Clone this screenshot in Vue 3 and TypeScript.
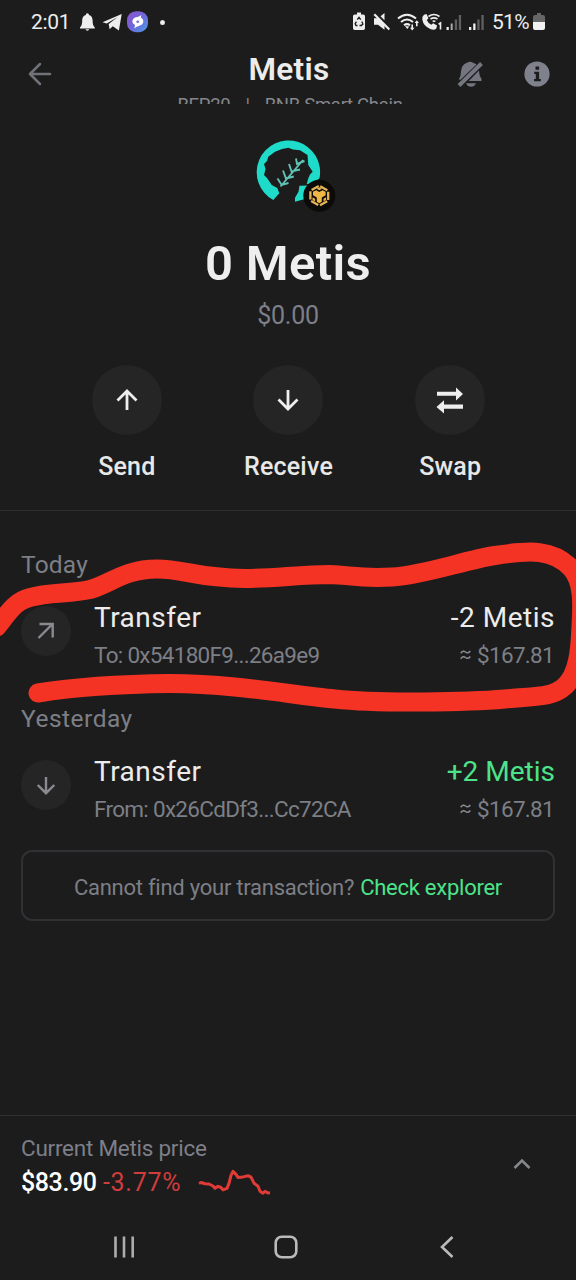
<script setup lang="ts">
interface Transaction {
  day: string
  direction: 'out' | 'in'
  party: string
  amount: string
  fiat: string
}

const transactions: Transaction[] = [
  { day: 'Today', direction: 'out', party: 'To: 0x54180F9...26a9e9', amount: '-2 Metis', fiat: '$167.81' },
  { day: 'Yesterday', direction: 'in', party: 'From: 0x26CdDf3...Cc72CA', amount: '+2 Metis', fiat: '$167.81' },
]
</script>

<template>
  <div class="screen">
    <div class="status">
      <span class="clock">2:01</span>
      <svg class="notifs" width="84" height="24" viewBox="0 0 84 24">
        <path d="M8.300 3.200a1.700 1.700 0 0 1 1.700 1.800c2.600.8 3.600 3 3.600 5.500 0 4 .8 5.500 2.200 7v1H1v-1c1.400-1.500 2.200-3 2.200-7C3.200 8 4.200 5.800 6.800 5a1.600 1.600 0 0 1 1.500-1.800zM6.500 19.300h3.700a1.900 1.900 0 0 1-3.700 0z" fill="#eee" />
        <path d="M23.500 12.200 42.700 4l-2.800 16.500-6.100-4.300-3.200 3-.9-5.200 9-7-11 6.500z" fill="#eee" />
        <defs>
          <linearGradient id="badge" x1="0" y1="0" x2="1" y2="1">
            <stop offset="0" stop-color="#8e4fd0" />
            <stop offset=".5" stop-color="#6f68d8" />
            <stop offset="1" stop-color="#4aa0e8" />
          </linearGradient>
        </defs>
        <rect x="48" y="1.200" width="21" height="21" rx="9" fill="url(#badge)" />
        <path d="M62.300 5l-.5 2.700c3 1.200 3.400 5.200.7 7.100-2 1.500-4.600 1.200-7.200 3.700l.8-3.500c-3.300-1.300-3.500-5-.8-6.900 2-1.400 4.700-.8 7-3.100z" fill="#fff" />
        <circle cx="58.700" cy="11.700" r="1.300" fill="#6f68d8" />
      </svg>
      <i class="dot" />
      <svg class="system" width="134" height="24" viewBox="0 0 134 24">
        <path d="M5 2.500h4v2h2.300q1.700 0 1.700 1.700v12.100q0 1.700-1.700 1.700H2.700Q1 20 1 18.300V6.200q0-1.700 1.700-1.700H5z" fill="#eee" />
        <path d="M5.300 9.700 7 7.300l1.700 2.400M9.800 11.500l1.100 2.500-1.600 1.500H7.500M5.500 15.500H4l-.9-1.700 1.300-2.200" fill="none" stroke="#1c1c1c" stroke-width="1.300" />
        <path d="M22 8.300h4.500l6 6.200v5.200L26 14.800h-4zM28.500 6.200l4-3.200v7.300z" fill="#eee" />
        <path d="m22.300 4.300 15 15.200" stroke="#eee" stroke-width="2.200" />
        <g fill="none" stroke="#eee" stroke-width="2">
          <path d="M46 8.500q9-7.600 18 0M49 12q6-5 12 0M52 15.300q3-2.300 6 0" />
        </g>
        <path d="m53 16 2.300 3 2-2.500zM60.200 20.500l-2.200-2.700h1.400v-3.300H61v3.300h1.400zM64.800 10.300l2.200 2.700h-1.400v3.300H64V13h-1.400z" fill="#eee" />
        <path d="M72 4.800 74.500 4l2 4.300-1.700 1.700q1.300 3.300 4.500 4.800l1.800-1.500 4 2.300-.8 2.800q-2 2.200-6 .5-7-3-8-9.500-.4-3 1.700-4.600z" fill="#eee" />
        <path d="M76.500 6.500q5.300-4 11 0M78.500 9q3.500-2.300 7 0M80.700 11.500q1.300-1 2.600 0" fill="none" stroke="#eee" stroke-width="1.600" />
        <path d="M86.600 14.200 88.500 13V19.500" fill="none" stroke="#eee" stroke-width="1.600" />
        <path d="M94.500 17h2.300v3h-2.300zM117 17h2.300v3H117zM121.200 13.500h2.300V20h-2.300z" fill="#eee" />
        <path d="M98.700 13.500h2v6.500h-2z" fill="#aaa" />
        <path d="M102.800 9.500h2.300V20h-2.300zM106.800 5h2.300v15h-2.300zM125.300 9.500h2.300V20h-2.300zM129.400 5h2.300v15h-2.300z" fill="#606060" />
      </svg>
      <span class="percent">51%</span>
      <svg class="battery" width="12" height="18" viewBox="0 0 12 18">
        <path d="M4 0h4v2h2q2 0 2 2v5H0V4q0-2 2-2h2z" fill="#666" />
        <path d="M0 9h12v6q0 2-2 2H2q-2 0-2-2z" fill="#f2f2f2" />
      </svg>
    </div>

    <header class="header">
      <svg class="back" width="24" height="24" viewBox="0 0 24 24">
        <path d="M22 12H2.500M12 2 2 12l10 10" fill="none" stroke="#70727a" stroke-width="2.500" stroke-linecap="round" stroke-linejoin="round" />
      </svg>
      <div class="heading">
        <h1>Metis</h1>
        <div class="network"><span>BEP20</span><span>|</span><span class="chain">BNB Smart Chain</span></div>
      </div>
      <svg class="mute" width="28" height="28" viewBox="0 0 28 28">
        <path d="M2.800 19.500Q5 16.500 5 11.500 5.200 4.800 11 2.700q3-1.700 6 0 2 .5 3.500 1.700L4.500 19.800zM23 10.500q.3 6 2.500 8.200v2.200H12.800zM10 23.300h10q-1.600 3.500-5 3.500t-5-3.500z" fill="#747680" />
        <path d="M3 25.500 25.500 3.500" stroke="#747680" stroke-width="4" />
      </svg>
      <svg class="info" width="26" height="26" viewBox="0 0 26 26">
        <circle cx="13" cy="13" r="12.600" fill="#7f818c" />
        <path d="M11.500 5.500h3.600v3.200h-3.600zM10.200 10.800h4.900v7.200h1.700v2.300H10V18h1.800v-5h-1.600z" fill="#1c1c1c" />
      </svg>
    </header>

    <section class="balance">
      <svg class="logo" width="82" height="76" viewBox="0 0 82 76">
        <path d="M17.300 63A31.700 31.700 0 1 1 63.500 41.300L58 45.500 50.700 47.300 52.300 41.300 54 37.500 56.700 34.700 52.300 28 51.500 18 44 13.200 37 12.500 32.300 10.700 26 12 19 14.700 12.300 19.700 11 24 8 27 9.500 32 8 38 11 41 15.700 48 21.300 51 23.300 56.300z" fill="#1fdcca" />
        <path d="m43.500 48.700-1 6-3.500 6v4l10-2.700 5-13.500z" fill="#1fdcca" />
        <path d="M24.500 49.500 47 23M21.500 41.500l4.200 6.500 6.800-2M27 33.500l3 8 7.800-2M33 27l2.500 7.500 8.500-2M40 21.500l1 5.500 7.500-3" fill="none" stroke="#5fc4b5" stroke-width="1.900" />
        <circle cx="63.300" cy="58.700" r="16" fill="#0d0b08" />
        <path d="m63.300 48.700 8.900 5v10l-8.900 5-8.900-5v-10z" fill="none" stroke="#e3b45a" stroke-width="2.300" stroke-dasharray="8.200 2" stroke-dashoffset="-1" />
        <path d="m57 54.800 3.200-1.600 3.100 1.800 3.100-1.800 3.200 1.600v3.500L65.800 60.500v4.200l-2.500 1.500-2.500-1.500v-4.200L57 58.300z" fill="#edb645" />
        <path d="m63.300 50.300 2.700 1.500-2.700 1.500-2.700-1.500zM56.500 60.300l2.600 1.500v2.600l-2.600-1.500zM70.100 60.300l-2.600 1.500v2.600l2.600-1.500z" fill="#edb645" />
      </svg>
      <div class="total">0 Metis</div>
      <div class="fiat-total">$0.00</div>
    </section>

    <nav class="actions">
      <button class="action">
        <span class="disc"><svg width="30" height="30" viewBox="0 0 30 30"><path d="M15 25V6M5.500 15.500 15 6l9.500 9.500" fill="none" stroke="#eee" stroke-width="2.800" /></svg></span>
        <span>Send</span>
      </button>
      <button class="action">
        <span class="disc"><svg width="30" height="30" viewBox="0 0 30 30"><path d="M15 5v19M5.500 14.500 15 24l9.500-9.500" fill="none" stroke="#eee" stroke-width="2.800" /></svg></span>
        <span>Receive</span>
      </button>
      <button class="action">
        <span class="disc"><svg width="30" height="30" viewBox="0 0 30 30"><path d="M2 6.800h19V2.500L28 9l-7 6.500v-4.700H2zM28 19.500H9v-4.300L1.500 22 9 28.500v-4.800h19z" fill="#eee" /></svg></span>
        <span>Swap</span>
      </button>
    </nav>

    <main class="history">
      <section v-for="tx in transactions" :key="tx.day" class="group">
        <h2 :class="tx.direction">{{ tx.day }}</h2>
        <div class="row">
          <span class="mark">
            <svg v-if="tx.direction === 'out'" width="24" height="24" viewBox="0 0 24 24"><path d="M4.500 19 18.500 5M5.500 5h13.200v13.500" fill="none" stroke="#898b91" stroke-width="2.400" /></svg>
            <svg v-else width="24" height="24" viewBox="0 0 24 24"><path d="M12 4v16M3.700 12l8.300 8.200 8.300-8.200" fill="none" stroke="#898b91" stroke-width="2.400" /></svg>
          </span>
          <div class="what">
            <div class="kind">Transfer</div>
            <div class="party">{{ tx.party }}</div>
          </div>
          <div class="value">
            <div class="amount" :class="tx.direction">{{ tx.amount }}</div>
            <div class="fiat"><svg width="11" height="12" viewBox="0 0 11 12"><path d="M.7 4.200q2.400-3.300 4.800-1.200t4.800-1M.7 9.700q2.400-3.300 4.800-1.200t4.800-1" fill="none" stroke="#898b91" stroke-width="1.500" /></svg><span>{{ tx.fiat }}</span></div>
          </div>
        </div>
      </section>
      <div class="explorer"><span>Cannot find your transaction?</span><a>Check explorer</a></div>
      <svg class="scribble" width="576" height="180" viewBox="0 536 576 180">
        <path d="M-3 626C8 612 15 600 30 596.500C48 591 70 593 90 588.500C110 583 125 568 157 568C185 568 195 577 245 577.500C275 577.500 300 573.500 330 573.500C350 574 360 578 392 576C425 574 465 559 495 554.500C530 549 553 548 571 567C584 581 582 606 581 625C580 650 578 673 565 685C552 697 535 695 505 698C470 701 380 703 335 698C290 694 240 683 170 682.500C120 683 75 686 38 692" fill="none" stroke="#f53325" stroke-width="19" stroke-linecap="round" stroke-linejoin="round" />
      </svg>
    </main>

    <footer class="price">
      <div>
        <div class="price-label">Current Metis price</div>
        <div class="quote">
          <b>$83.90</b><span>-3.77%</span>
          <svg width="72" height="28" viewBox="0 0 72 28"><path d="M1 14.500l2-1 4 1.200 4 .3 4 2 2 2.300 3-2 3 1.200 2 2.400 4-1.500 2-5 2-8 2-4 3 3 2 3 5-.5 5-1.200 3 1.500 3 6 4 3 2 5 3 2 2-2 3 1.800 3-.5" fill="none" stroke="#e13b38" stroke-width="3" stroke-linejoin="round" /></svg>
        </div>
      </div>
      <svg class="expand" width="18" height="14" viewBox="0 0 18 14"><path d="m1.500 11 7.500-7.500 7.500 7.500" fill="none" stroke="#85878b" stroke-width="2.600" /></svg>
    </footer>

    <div class="keys">
      <svg width="24" height="24" viewBox="0 0 24 24"><path d="M3.500 1.500v21M12 1.500v21M20.700 1.500v21" stroke="#adadad" stroke-width="2.600" /></svg>
      <svg width="24" height="24" viewBox="0 0 24 24"><rect x="1.700" y="1.700" width="20.600" height="20.600" rx="6" fill="none" stroke="#bababa" stroke-width="2.600" /></svg>
      <svg width="24" height="24" viewBox="0 0 24 24"><path d="M17.500 2 7 12l10.500 10" fill="none" stroke="#bababa" stroke-width="2.600" /></svg>
    </div>
  </div>
</template>

<style>
body {
  background: #1c1c1c;
}
</style>

<style scoped>
.screen {
  width: 576px;
  height: 1280px;
  display: flex;
  flex-direction: column;
  overflow: hidden;
  box-sizing: border-box;
  background: #1c1c1c;
  color: #ececec;
  font-family: Roboto, "Noto Sans", sans-serif;
}
svg {
  display: block;
  flex: none;
}
.status {
  flex: none;
  height: 44px;
  box-sizing: border-box;
  padding: 0 31px;
  display: flex;
  align-items: center;
  font-size: 21px;
  white-space: nowrap;
}
.clock {
  width: 49px;
  letter-spacing: -0.3px;
}
.dot {
  width: 5px;
  height: 5px;
  border-radius: 50%;
  background: #eee;
  margin-left: -3px;
}
.system {
  margin-left: 187px;
}
.percent {
  margin-left: 6px;
  width: 42px;
  letter-spacing: -0.6px;
}
.header {
  flex: none;
  height: 60px;
  box-sizing: border-box;
  padding: 0 26px 0 28px;
  display: grid;
  grid-template-columns: 108px 306px 42px 1fr;
  align-items: center;
  overflow: hidden;
}
.mute {
  justify-self: end;
}
.heading {
  height: 60px;
  text-align: center;
}
.heading h1 {
  margin: 6px 0 0;
  font-size: 31.5px;
  line-height: 40px;
  font-weight: 600;
  letter-spacing: 0.3px;
  color: #ececec;
}
.network {
  margin-top: 4px;
  margin-left: 2px;
  display: flex;
  justify-content: center;
  gap: 15px;
  color: #85878d;
  font-size: 18.500px;
  line-height: 22px;
  height: 10px;
  overflow: hidden;
  letter-spacing: -0.3px;
}
.info {
  justify-self: end;
}
.balance {
  flex: none;
  height: 261px;
  display: flex;
  flex-direction: column;
  align-items: center;
}
.logo {
  margin: 33px 0 0 18px;
}
.total {
  margin-top: 21px;
  font-size: 49px;
  line-height: 60px;
  font-weight: 600;
  letter-spacing: 0.3px;
  color: #eee;
}
.fiat-total {
  margin-top: 7px;
  font-size: 25px;
  line-height: 30px;
  letter-spacing: -0.3px;
  color: #7d7f89;
}
.actions {
  flex: none;
  height: 145px;
  padding: 0 45px 0 46px;
  display: grid;
  grid-template-columns: repeat(3, 1fr);
  border-bottom: 1px solid #2e2e2e;
}
.action {
  display: flex;
  flex-direction: column;
  align-items: center;
  justify-content: flex-start;
  gap: 16px;
  padding: 0;
  border: 0;
  background: none;
  color: #e8e8e8;
  font: 500 25px/32px Roboto, sans-serif;
  letter-spacing: 0.2px;
}
.disc {
  width: 70px;
  height: 70px;
  border-radius: 50%;
  background: #252526;
  display: grid;
  place-items: center;
}
.history {
  flex: none;
  height: 604px;
  box-sizing: border-box;
  padding: 39px 21px 0;
  position: relative;
}
.group {
  height: 153.5px;
}
h2 {
  margin: 0;
  font-size: 24.5px;
  line-height: 30px;
  font-weight: 400;
  color: #7d7f86;
  letter-spacing: 0.2px;
}
h2.in {
  letter-spacing: 0.5px;
}
.row {
  margin-top: 21px;
  display: flex;
}
.mark {
  width: 50px;
  height: 50px;
  margin: 5px 23px 0 0;
  border-radius: 50%;
  background: #252526;
  display: grid;
  place-items: center;
}
.what {
  flex: 1;
}
.kind,
.amount {
  font-size: 28px;
  line-height: 34px;
  letter-spacing: 0.5px;
}
.party,
.fiat {
  margin-top: 6px;
  font-size: 22.5px;
  line-height: 28px;
  color: #7d7f86;
  letter-spacing: -0.7px;
}
.value {
  text-align: right;
}
.amount.in {
  color: #4de38a;
  letter-spacing: 0;
}
.fiat {
  display: flex;
  justify-content: flex-end;
  align-items: center;
  gap: 6px;
  padding-right: 1px;
}
.explorer {
  height: 71px;
  margin-top: -7px;
  box-sizing: border-box;
  border: 2px solid #303134;
  border-radius: 11px;
  display: flex;
  align-items: center;
  justify-content: center;
  gap: 6px;
  padding-top: 3px;
  font-size: 22px;
  letter-spacing: -0.25px;
  color: #7d7f86;
}
.explorer a {
  color: #4de38a;
}
.scribble {
  position: absolute;
  left: 0;
  top: 26px;
}
.price {
  flex: none;
  height: 99px;
  box-sizing: border-box;
  border-top: 1px solid #303030;
  padding: 18px 45px 0 21px;
  display: flex;
  justify-content: space-between;
}
.price-label {
  font-size: 22.5px;
  line-height: 28px;
  letter-spacing: -0.25px;
  color: #7d7f89;
}
.quote {
  display: flex;
  align-items: center;
  margin-top: 6px;
  font-size: 25px;
  line-height: 30px;
}
.quote b {
  font-weight: 500;
  color: #fff;
  width: 82px;
  letter-spacing: -0.4px;
}
.quote span {
  color: #d13c3c;
  width: 95px;
  letter-spacing: 0.7px;
}
.expand {
  margin-top: 23px;
}
.keys {
  flex: 1;
  display: flex;
  justify-content: space-between;
  align-items: center;
  padding: 0 117px 0 112px;
}
</style>
